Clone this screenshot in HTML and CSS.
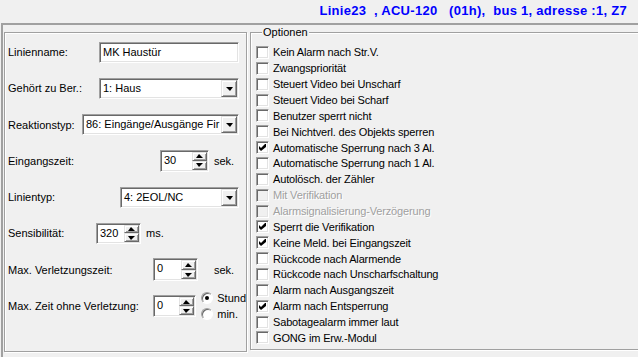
FILE: index.html
```html
<!DOCTYPE html>
<html>
<head>
  <meta charset="utf-8">
  <title>Linie 23</title>
  <link rel="stylesheet" href="styles.css">
</head>
<body>
  <div class="title">Linie23  , ACU-120   (01h),  bus 1, adresse :1, Z7</div>

  <div class="frame">
    <div class="panel">
      <div class="row">
        <span class="lbl w91">Linienname:</span>
        <div class="edit sunken w140 h21">MK Haustür</div>
      </div>
      <div class="row">
        <span class="lbl w91">Gehört zu Ber.:</span>
        <div class="combo sunken w140 h21">
          <span class="combo-text">1: Haus</span>
          <span class="combo-btn raised"><span class="arrow-down"></span></span>
        </div>
      </div>
      <div class="row">
        <span class="lbl w74">Reaktionstyp:</span>
        <div class="combo sunken w157 h21">
          <span class="combo-text">86: Eingänge/Ausgänge Fir</span>
          <span class="combo-btn raised"><span class="arrow-down"></span></span>
        </div>
      </div>
      <div class="row">
        <span class="lbl w152">Eingangszeit:</span>
        <div class="spin sunken w49 h22">
          <span class="spin-val">30</span>
          <span class="spin-btns">
            <span class="spin-btn raised"><span class="arrow-up"></span></span>
            <span class="spin-btn raised"><span class="arrow-dn"></span></span>
          </span>
        </div>
        <span class="unit">sek.</span>
      </div>
      <div class="row">
        <span class="lbl w112">Linientyp:</span>
        <div class="combo sunken w119 h21">
          <span class="combo-text">4: 2EOL/NC</span>
          <span class="combo-btn raised"><span class="arrow-down"></span></span>
        </div>
      </div>
      <div class="row">
        <span class="lbl w88">Sensibilität:</span>
        <div class="spin sunken w45 h21">
          <span class="spin-val">320</span>
          <span class="spin-btns">
            <span class="spin-btn raised"><span class="arrow-up"></span></span>
            <span class="spin-btn raised"><span class="arrow-dn"></span></span>
          </span>
        </div>
        <span class="unit">ms.</span>
      </div>
      <div class="row">
        <span class="lbl w145">Max. Verletzungszeit:</span>
        <div class="spin sunken w45 h23">
          <span class="spin-val">0</span>
          <span class="spin-btns">
            <span class="spin-btn raised"><span class="arrow-up"></span></span>
            <span class="spin-btn raised"><span class="arrow-dn"></span></span>
          </span>
        </div>
        <span class="unit wide">sek.</span>
      </div>
      <div class="row">
        <span class="lbl w145">Max. Zeit ohne Verletzung:</span>
        <div class="spin sunken w45 h22">
          <span class="spin-val">0</span>
          <span class="spin-btns">
            <span class="spin-btn raised"><span class="arrow-up"></span></span>
            <span class="spin-btn raised"><span class="arrow-dn"></span></span>
          </span>
        </div>
        <div class="radios">
          <div class="radio-row"><span class="radio on"></span>Stund</div>
          <div class="radio-row"><span class="radio"></span>min.</div>
        </div>
      </div>
    </div>

    <fieldset class="options">
      <legend>Optionen</legend>
      <div class="opt"><span class="cb"></span>Kein Alarm nach Str.V.</div>
      <div class="opt"><span class="cb"></span>Zwangspriorität</div>
      <div class="opt"><span class="cb"></span>Steuert Video bei Unscharf</div>
      <div class="opt"><span class="cb"></span>Steuert Video bei Scharf</div>
      <div class="opt"><span class="cb"></span>Benutzer sperrt nicht</div>
      <div class="opt"><span class="cb"></span>Bei Nichtverl. des Objekts sperren</div>
      <div class="opt"><span class="cb"><svg class="tick" viewBox="0 0 7 7"><path d="M0 2 2 4 6 0h1v3L2 7 0 5z"/></svg></span>Automatische Sperrung nach 3 Al.</div>
      <div class="opt"><span class="cb"></span>Automatische Sperrung nach 1 Al.</div>
      <div class="opt"><span class="cb"></span>Autolösch. der Zähler</div>
      <div class="opt disabled"><span class="cb"></span>Mit Verifikation</div>
      <div class="opt disabled"><span class="cb"></span>Alarmsignalisierung-Verzögerung</div>
      <div class="opt"><span class="cb"><svg class="tick" viewBox="0 0 7 7"><path d="M0 2 2 4 6 0h1v3L2 7 0 5z"/></svg></span>Sperrt die Verifikation</div>
      <div class="opt"><span class="cb"><svg class="tick" viewBox="0 0 7 7"><path d="M0 2 2 4 6 0h1v3L2 7 0 5z"/></svg></span>Keine Meld. bei Eingangszeit</div>
      <div class="opt"><span class="cb"></span>Rückcode nach Alarmende</div>
      <div class="opt"><span class="cb"></span>Rückcode nach Unscharfschaltung</div>
      <div class="opt"><span class="cb"></span>Alarm nach Ausgangszeit</div>
      <div class="opt"><span class="cb"><svg class="tick" viewBox="0 0 7 7"><path d="M0 2 2 4 6 0h1v3L2 7 0 5z"/></svg></span>Alarm nach Entsperrung</div>
      <div class="opt"><span class="cb"></span>Sabotagealarm immer laut</div>
      <div class="opt"><span class="cb"></span>GONG im Erw.-Modul</div>
    </fieldset>
  </div>
</body>
</html>
```

FILE: styles.css
```css
* {
  box-sizing: border-box;
}

body {
  margin: 0;
  background: #f0f0f0;
  font-family: "Liberation Sans", Arial, sans-serif;
  font-size: 11px;
  color: #000;
  overflow: hidden;
  height: 357px;
}

.title {
  height: 23px;
  line-height: 22px;
  padding-right: 11px;
  text-align: right;
  white-space: pre;
  font-size: 13px;
  font-weight: bold;
  letter-spacing: 0.28px;
  color: #0000ff;
}

.frame {
  margin-left: 1px;
  height: 334px;
  border-top: 2px solid #a0a0a0;
  border-left: 2px solid #a0a0a0;
  padding: 1px 0 0 1px;
  display: flex;
  align-items: flex-start;
  gap: 3px;
}

/* etched group boxes */
.panel {
  margin-top: 6px;
  width: 243px;
  height: 320px;
  border: 1px solid #a0a0a0;
  box-shadow: inset 1px 1px #fff, 1px 1px #fff;
  padding: 8px 0 0 3px;
  display: flex;
  flex-direction: column;
  gap: 14.3px;
}

.row {
  height: 22px;
  display: flex;
  align-items: center;
}

.lbl { flex: none; }
.w74 { width: 74px; }
.w88 { width: 88px; }
.w91 { width: 91px; }
.w112 { width: 112px; }
.w145 { width: 145px; }
.w152 { width: 152px; }

.w45 { width: 45px; }
.w49 { width: 49px; }
.w119 { width: 119px; }
.w140 { width: 140px; }
.w157 { width: 157px; }
.h21 { height: 21px; }
.h22 { height: 22px; }
.h23 { height: 23px; }

/* classic 3d borders */
.sunken {
  background: #fff;
  border: 1px solid;
  border-color: #a0a0a0 #fff #fff #a0a0a0;
  box-shadow: inset 1px 1px #696969, inset -1px -1px #e3e3e3;
}

.raised {
  background: #f0f0f0;
  border: 1px solid;
  border-color: #e3e3e3 #696969 #696969 #e3e3e3;
  box-shadow: inset 1px 1px #fff, inset -1px -1px #a0a0a0;
}

.edit {
  padding: 0 3px;
  line-height: 19px;
}

.combo {
  padding: 1px;
  display: flex;
}

.combo-text {
  flex: 1;
  padding-left: 2px;
  line-height: 17px;
  white-space: nowrap;
  overflow: hidden;
}

.combo-btn {
  flex: none;
  width: 16px;
  display: flex;
  align-items: center;
  justify-content: center;
}

.arrow-down {
  width: 0;
  height: 0;
  border-left: 4px solid transparent;
  border-right: 3px solid transparent;
  border-top: 4px solid #000;
  margin-top: 1px;
}

.spin {
  padding: 1px;
  display: flex;
}

.spin-val {
  flex: 1;
  padding-left: 2px;
  line-height: 17px;
}

.spin-btns {
  flex: none;
  width: 15px;
  display: flex;
  flex-direction: column;
}

.spin-btn {
  flex: 1;
  display: flex;
  align-items: center;
  justify-content: center;
}

.arrow-up,
.arrow-dn {
  width: 0;
  height: 0;
  border-left: 3px solid transparent;
  border-right: 4px solid transparent;
}

.arrow-up { border-bottom: 4px solid #000; }
.arrow-dn { border-top: 4px solid #000; }

.unit { margin-left: 5px; }
.unit.wide { margin-left: 16px; }

.radios {
  margin-left: 5px;
  display: flex;
  flex-direction: column;
}

.radio-row {
  height: 16px;
  display: flex;
  align-items: center;
}

.radio {
  width: 12px;
  height: 12px;
  margin-right: 4px;
  border-radius: 50%;
  background: #fff;
  border: 1px solid;
  border-color: #a0a0a0 #fff #fff #a0a0a0;
  box-shadow: inset 1px 1px #696969;
  display: flex;
  align-items: center;
  justify-content: center;
}

.radio.on::after {
  content: "";
  width: 4px;
  height: 4px;
  border-radius: 50%;
  background: #000;
}

/* options group */
.options {
  flex: 1;
  margin: 0 -20px 0 0;
  min-width: 0;
  height: 324px;
  padding: 5.5px 0 0 5px;
  border: 1px solid #a0a0a0;
  box-shadow: inset 1px 1px #fff, 1px 1px #fff;
}

.options legend {
  margin-left: 6px;
  padding: 0 1px;
  line-height: 13px;
  background: #f0f0f0;
}

.opt {
  height: 15.87px;
  display: flex;
  align-items: center;
  white-space: nowrap;
  letter-spacing: -0.15px;
}

.cb {
  flex: none;
  width: 13px;
  height: 13px;
  margin-right: 4px;
  background: #fff;
  border: 1px solid;
  border-color: #a0a0a0 #fff #fff #a0a0a0;
  box-shadow: inset 1px 1px #696969, inset -1px -1px #e3e3e3;
  display: flex;
  align-items: center;
  justify-content: center;
}

.tick {
  width: 7px;
  height: 7px;
  fill: #000;
}

.opt.disabled {
  color: #a0a0a0;
  text-shadow: 1px 1px #fff;
}

.opt.disabled .cb {
  background: #f0f0f0;
}
```
